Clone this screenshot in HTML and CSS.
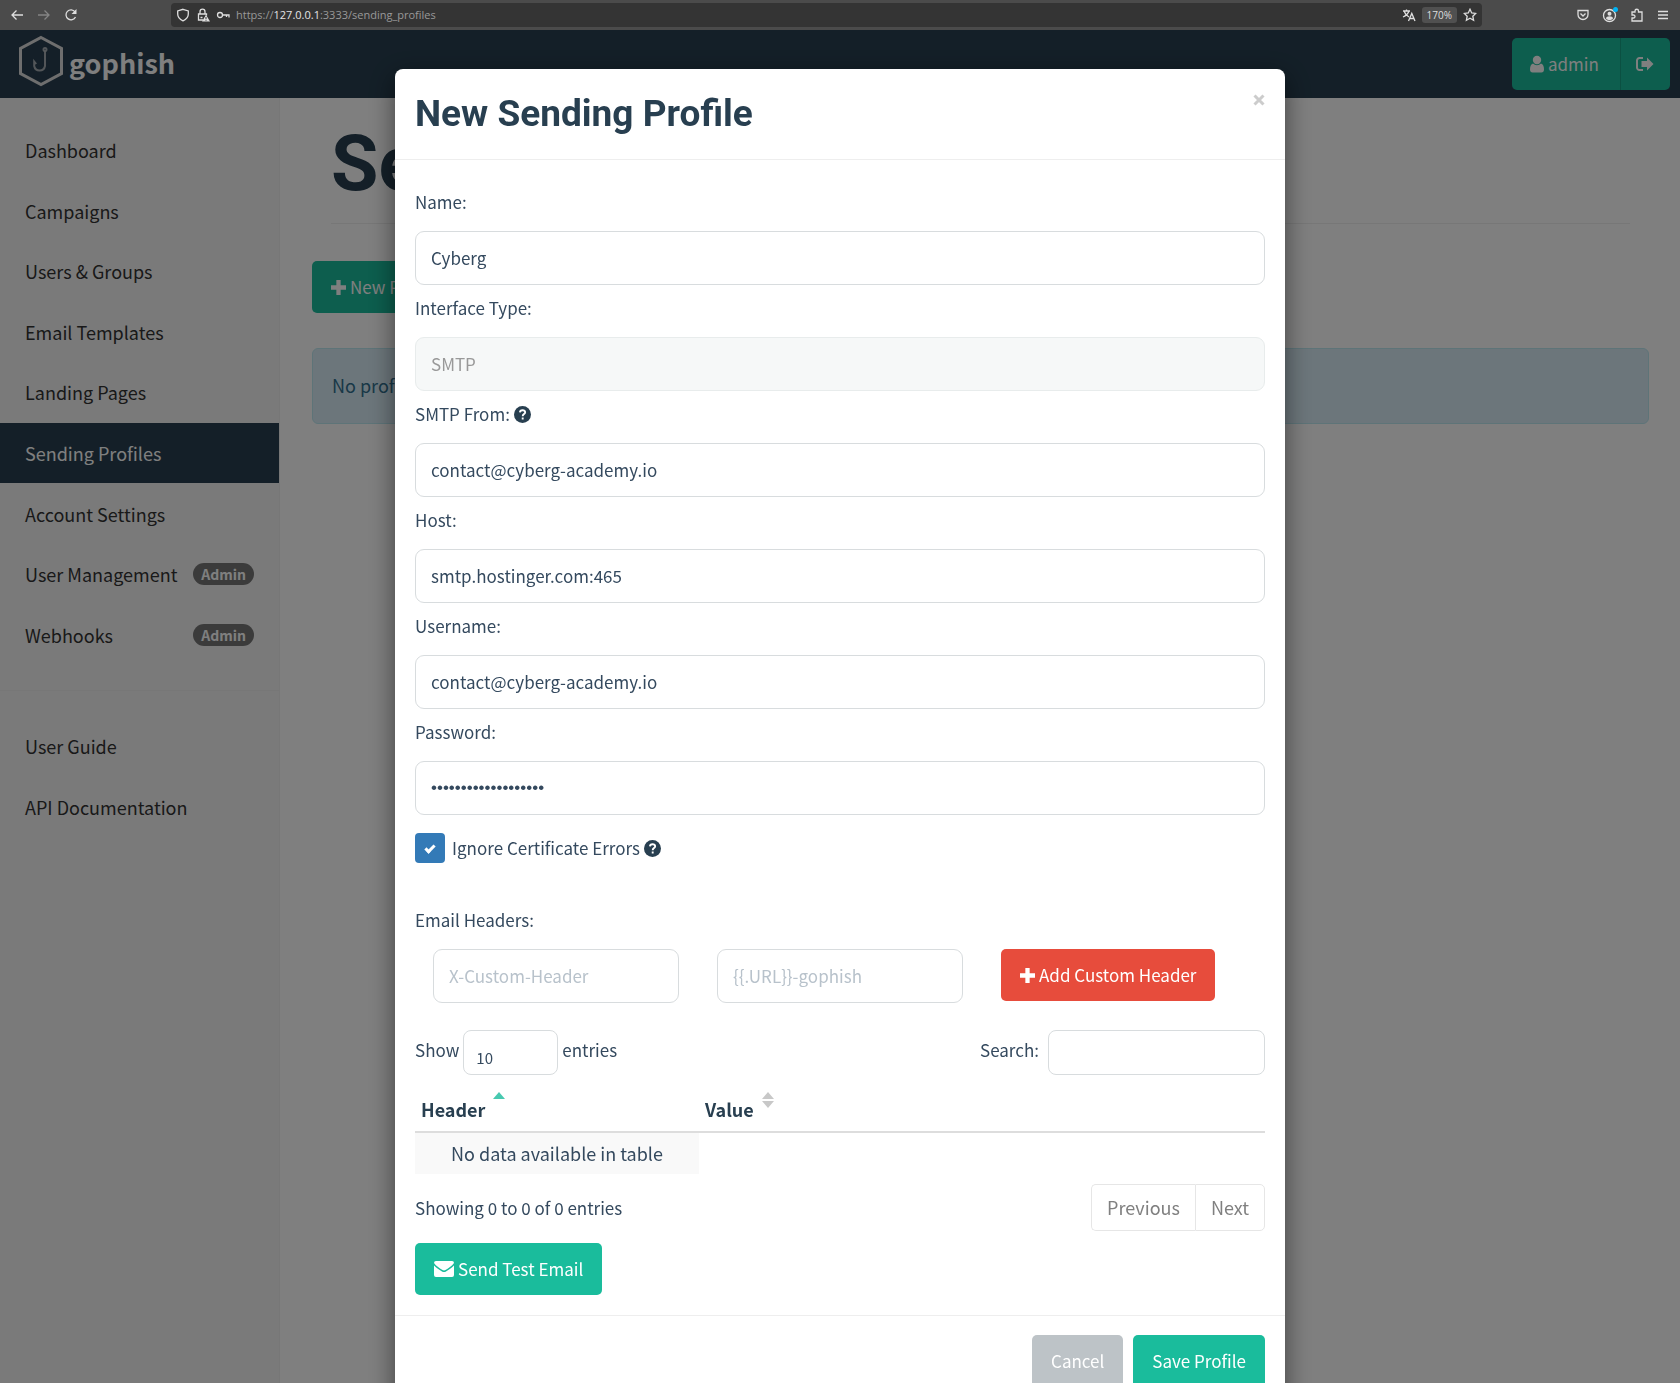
FILE: index.html
```html
<!DOCTYPE html>
<html lang="en">
<head>
<meta charset="utf-8">
<title>Sending Profiles - Gophish</title>
<link rel="stylesheet" href="styles.css">
</head>
<body>
<div class="browser">
  <div class="browser-nav">
    <button type="button" aria-label="Back"><svg width="14" height="14" viewBox="0 0 14 14"><path d="M13 7H2M6.500 2.500L2 7l4.500 4.500"/></svg></button>
    <button type="button" class="dim" aria-label="Forward"><svg width="14" height="14" viewBox="0 0 14 14"><path d="M1 7h11M7.500 2.500L12 7l-4.500 4.500"/></svg></button>
    <button type="button" aria-label="Reload"><svg width="14" height="14" viewBox="0 0 14 14"><path d="M11.500 9A5 5 0 1 1 11 3.800"/><path class="solid" d="M12.500 1v5h-5z"/></svg></button>
  </div>
  <div class="address">
    <svg width="14" height="14" viewBox="0 0 14 14"><path d="M7 1.300L12.300 3v3c0 3.500-2.300 5.500-5.300 6.800C4 11.500 1.700 9.500 1.700 6V3z"/></svg>
    <svg width="14" height="14" viewBox="0 0 14 14"><path d="M7 12H2.500V6h8v1.500M4 6V3.700a2.500 2.500 0 0 1 5 0V6M4.500 9.500h2"/><path class="solid" d="M10 6.800l4 6.700H6z"/><path class="cut" d="M10 9v2M10 11.700v1"/></svg>
    <svg width="14" height="14" viewBox="0 0 14 14"><circle cx="4" cy="7" r="2.500"/><path d="M6.500 7H13v2.500M10.500 7v2"/></svg>
    <span class="url">https://<b>127.0.0.1</b>:3333/sending_profiles</span>
    <svg width="14" height="14" viewBox="0 0 14 14"><path d="M1 3h7M4.500 1.500V3M2 3c1 3 3 5 5 6M7 3C6 6 3.500 8 1 9M6.500 13L9.800 5.500 13 13M8 10.500h4"/></svg>
    <button type="button" class="zoom-level">170%</button>
    <svg width="14" height="14" viewBox="0 0 14 14"><path d="M7 1.200l1.700 3.700 4 .5-2.900 2.800.8 4.100L7 10.300l-3.600 2 .8-4.100L1.300 5.400l4-.5z"/></svg>
  </div>
  <div class="browser-tools">
    <svg width="14" height="14" viewBox="0 0 14 14"><path d="M2 2.500h10v4a5 5 0 0 1-10 0zM4.500 5.500L7 8l2.500-2.500"/></svg>
    <svg width="16" height="16" viewBox="0 0 16 16"><circle cx="7.500" cy="8.500" r="6"/><circle class="solid" cx="7.500" cy="6.700" r="2"/><path class="solid" d="M4 11.500c0-3 7-3 7 0-2 2-5 2-7 0z"/><circle class="alert-dot" cx="13.500" cy="2.500" r="2.500"/></svg>
    <svg width="14" height="14" viewBox="0 0 14 14"><path d="M2 4h3V3a1.700 1.700 0 0 1 3.500 0v1H12v9H2v-3h1.500a1.400 1.400 0 0 0 0-3H2z"/></svg>
    <svg width="14" height="14" viewBox="0 0 14 14"><path d="M2 3.500h10M2 7h10M2 10.500h10"/></svg>
  </div>
</div>

<div class="app">
  <header class="topbar">
    <a class="brand" href="#">
      <svg width="46" height="52" viewBox="0 0 46 52"><path class="hex" d="M23 2.500L43.500 13.500v25L23 49.500 2.500 38.500v-25z"/><path class="hook" d="M27 16.500V31a5.500 5.500 0 0 1-10.800 0v-4.500l2 2.500"/><circle class="hook" cx="27" cy="14.500" r="1.500"/></svg>
      <span>gophish</span>
    </a>
    <div class="user-menu">
      <button type="button" class="btn btn-user"><svg width="14" height="18" viewBox="0 0 14 18"><circle cx="7" cy="5" r="4.200"/><path d="M3 8.500C1 9 0 11.500 0 14.500 0 16.500 1 17.500 2.500 17.500h9c1.500 0 2.500-1 2.500-3C14 11.500 13 9 11 8.500a5.500 5.500 0 0 1-8 0z"/></svg>admin</button>
      <button type="button" class="btn btn-logout" aria-label="Log out"><svg width="18" height="16" viewBox="0 0 18 16"><path class="line" d="M7 2H3.500A2.500 2.500 0 0 0 1 4.500v7A2.500 2.500 0 0 0 3.500 14H7"/><path d="M11 1.500L17.500 8 11 14.500V11H5.500V5H11z"/></svg></button>
    </div>
  </header>
  <div class="columns">
    <nav class="sidebar">
      <ul class="menu menu-main">
        <li><a href="#">Dashboard</a></li>
        <li><a href="#">Campaigns</a></li>
        <li><a href="#">Users &amp; Groups</a></li>
        <li><a href="#">Email Templates</a></li>
        <li><a href="#">Landing Pages</a></li>
        <li><a href="#" class="active">Sending Profiles</a></li>
        <li><a href="#">Account Settings</a></li>
        <li><a href="#">User Management <span class="badge">Admin</span></a></li>
        <li><a href="#">Webhooks <span class="badge">Admin</span></a></li>
      </ul>
      <ul class="menu menu-help">
        <li><a href="#">User Guide</a></li>
        <li><a href="#">API Documentation</a></li>
      </ul>
    </nav>
    <main class="main">
      <h1>Sending Profiles</h1>
      <button type="button" class="btn btn-primary"><svg width="15" height="15" viewBox="1 1 14 14"><path d="M6 1h4v5h5v4h-5v5H6v-5H1V6h5z"/></svg>New Profile</button>
      <div class="alert">No profiles created yet. Let's create one!</div>
    </main>
  </div>
</div>

<div class="backdrop">
  <form class="modal" role="dialog" aria-labelledby="modal-title">
    <div class="modal-header">
      <h4 id="modal-title">New Sending Profile</h4>
      <button type="button" class="close" aria-label="Close"><svg width="12" height="12" viewBox="0 0 12 12"><path d="M1.500 1.500l9 9M10.500 1.500l-9 9"/></svg></button>
    </div>
    <div class="modal-body">
      <label for="name">Name:</label>
      <input class="control" type="text" id="name" value="Cyberg">
      <label for="interface">Interface Type:</label>
      <input class="control" type="text" id="interface" value="SMTP" disabled>
      <label for="from">SMTP From: <svg class="help" width="17" height="17" viewBox="0 0 18 18"><circle cx="9" cy="9" r="9"/><path d="M6.300 6.800C6.500 3.500 12 3.800 11.800 6.900 11.700 8.600 9.200 8.600 9.200 10.800M9.200 12.200v2.200"/></svg></label>
      <input class="control" type="text" id="from" value="contact@cyberg-academy.io">
      <label for="host">Host:</label>
      <input class="control" type="text" id="host" value="smtp.hostinger.com:465">
      <label for="username">Username:</label>
      <input class="control" type="text" id="username" value="contact@cyberg-academy.io">
      <label for="password">Password:</label>
      <input class="control" type="password" id="password" value="0123456789012345678">
      <div class="check">
        <input type="checkbox" id="ignore" checked>
        <label for="ignore">Ignore Certificate Errors <svg class="help" width="17" height="17" viewBox="0 0 18 18"><circle cx="9" cy="9" r="9"/><path d="M6.300 6.800C6.500 3.500 12 3.800 11.800 6.900 11.700 8.600 9.200 8.600 9.200 10.800M9.200 12.200v2.200"/></svg></label>
      </div>
      <label for="header-key" class="headers-label">Email Headers:</label>
      <div class="header-form">
        <input class="control" type="text" id="header-key" placeholder="X-Custom-Header">
        <input class="control" type="text" aria-label="Header value" placeholder="{{.URL}}-gophish">
        <button type="button" class="btn btn-danger"><svg width="15" height="15" viewBox="1 1 14 14"><path d="M6 1h4v5h5v4h-5v5H6v-5H1V6h5z"/></svg>Add Custom Header</button>
      </div>
      <div class="table-tools">
        <div class="tool"><label for="length">Show</label><select id="length"><option>10</option><option>25</option><option>50</option></select><span>entries</span></div>
        <div class="tool tool-search"><label for="search">Search:</label><input type="search" id="search"></div>
      </div>
      <table>
        <thead>
          <tr>
            <th>Header<svg class="sort" width="12" height="18" viewBox="0 0 12 18"><path class="on" d="M0 8l6-7 6 7z"/></svg></th>
            <th>Value<svg class="sort" width="12" height="18" viewBox="0 0 12 18"><path d="M0 8l6-7 6 7zM0 10h12l-6 7z"/></svg></th>
          </tr>
        </thead>
        <tbody><tr><td>No data available in table</td></tr></tbody>
      </table>
      <div class="table-foot">
        <span>Showing 0 to 0 of 0 entries</span>
        <div class="pager"><button type="button">Previous</button><button type="button">Next</button></div>
      </div>
      <button type="button" class="btn btn-primary"><svg width="20" height="16" viewBox="0 0 20 16"><path d="M0 2a2 2 0 0 1 2-2h16a2 2 0 0 1 2 2c-2 3-6 5.500-8.500 7-1 .6-2 .6-3 0C6 7.500 2 5 0 2zM0 4.500c3 3 5.500 4.500 8 6 1.300.8 2.700.8 4 0 2.500-1.500 5-3 8-6V14a2 2 0 0 1-2 2H2a2 2 0 0 1-2-2z"/></svg>Send Test Email</button>
    </div>
    <div class="modal-footer">
      <button type="button" class="btn btn-default">Cancel</button>
      <button type="button" class="btn btn-primary">Save Profile</button>
    </div>
  </form>
</div>
</body>
</html>
```
FILE: styles.css
```css
* { box-sizing: border-box; }

body {
  margin: 0;
  min-height: 100vh;
  display: flex;
  flex-direction: column;
  background: #fff;
  color: #34495e;
  font: 17px/26px "Noto Sans CJK SC", "Open Sans", sans-serif;
}

button, input, select { font: inherit; }
button { cursor: pointer; }
ul { list-style: none; margin: 0; padding: 0; }
a { color: inherit; text-decoration: none; }

/* Browser toolbar */
.browser {
  display: flex;
  align-items: center;
  height: 30px;
  padding: 0 10px;
  background: #4b4b4b;
  color: #dedede;
  font: 11px/16px "Open Sans", "Noto Sans", sans-serif;
}
.browser svg { flex: none; display: block; fill: none; stroke: currentColor; stroke-width: 1.3; }
.browser .solid { fill: currentColor; stroke: none; }
.browser .cut { stroke: #343434; stroke-width: 1; }
.browser .alert-dot { fill: #00b3f4; stroke: none; }
.browser-nav { display: flex; gap: 13px; width: 161px; }
.browser-nav button { padding: 0; border: 0; background: none; color: inherit; }
.browser-nav .dim { color: #858585; }
.address {
  flex: 1;
  display: flex;
  align-items: center;
  gap: 6px;
  height: 24px;
  padding: 0 5px;
  border-radius: 4px;
  background: #343434;
}
.url { flex: 1; color: #999; }
.url b { font-weight: 400; color: #e4e4e4; }
.zoom-level { height: 16px; padding: 0 5px; border: 0; border-radius: 3px; background: #505050; color: #dedede; font-size: 10px; line-height: 16px; }
.browser-tools { display: flex; align-items: center; gap: 12px; margin-left: 94px; }

/* Top bar */
.app { flex: 1; display: flex; flex-direction: column; }
.topbar {
  display: flex;
  justify-content: space-between;
  align-items: center;
  height: 68px;
  padding: 0 10px 0 18px;
  background: #283f50;
}
.brand { display: flex; align-items: center; gap: 5px; color: #fff; font-size: 27px; line-height: 40px; font-weight: 700; }
.brand svg { fill: none; stroke: #ddd; margin-bottom: 6px; }
.brand span { padding-bottom: 3px; }
.hex { stroke-width: 3; }
.hook { stroke-width: 2; opacity: .7; }

.btn {
  display: inline-flex;
  align-items: center;
  gap: 4px;
  height: 52px;
  padding: 0 19px;
  border: 0;
  border-radius: 5px;
  color: #fff;
}
.btn svg { flex: none; fill: currentColor; }
.btn .line { fill: none; stroke: currentColor; stroke-width: 2; }
.btn-primary { background: #1abc9c; }
.btn-danger { background: #e74c3c; }
.btn-default { background: #bdc3c7; }
.user-menu { display: flex; }
.btn-user { background: #1abc9c; border-radius: 5px 0 0 5px; border-right: 1px solid #16a085; width: 109px; padding-left: 18px; }
.btn-logout { background: #1abc9c; border-radius: 0 5px 5px 0; padding: 0 16px 0 15px; }

/* Sidebar */
.columns { flex: 1; display: flex; }
.sidebar { width: 280px; padding-top: 22px; background: #f5f5f5; border-right: 1px solid #eee; color: #333; font-size: 18px; }
.menu { display: grid; grid-auto-rows: 1fr; }
.menu-main { height: 545px; }
.menu-help { height: 147px; margin-top: 25px; padding-top: 25px; border-top: 1px solid #eee; }
.menu a { display: flex; align-items: center; justify-content: space-between; height: 100%; padding: 0 25px; }
.menu .active { background: #283f50; color: #fff; }
.badge { padding: 0 8px; border-radius: 12px; background: #777; color: #fff; font-size: 14px; line-height: 22px; font-weight: 700; }

/* Page */
.main { flex: 1; padding: 20px 31px 0 32px; }
.main h1 {
  margin: 0 19px 37px;
  padding-bottom: 13px;
  border-bottom: 1px solid #eee;
  color: #283f50;
  font: 700 77px/92px Roboto, sans-serif;
}
.alert { margin-top: 35px; padding: 23px 19px 25px; border: 1px solid #bce8f1; border-radius: 6px; background: #d9edf7; color: #31708f; font-size: 18px; }

/* Dialog */
.backdrop { position: fixed; inset: 30px 0 0; overflow: hidden; background: rgba(0, 0, 0, .5); }
.modal {
  max-width: 890px;
  margin: 39px auto;
  border-radius: 8px;
  background: #fff;
  box-shadow: 0 8px 26px rgba(0, 0, 0, .5);
}
.modal-header { display: flex; justify-content: space-between; align-items: flex-start; padding: 20px; border-bottom: 1px solid #eee; }
.modal-header h4 { margin: 0; color: #283f50; font: 700 37px/50px Roboto, sans-serif; }
.close { margin-top: 5px; padding: 0; border: 0; background: none; line-height: 0; }
.close svg { fill: none; stroke: #ccc; stroke-width: 3; }
.modal-body { padding: 19px 20px 20px; }
.modal-body > label { display: block; margin: 10px 0 16px; }
.help { vertical-align: -2px; fill: #283f50; }
.help path { fill: none; stroke: #fff; stroke-width: 2; }

.control {
  display: block;
  width: 100%;
  height: 54px;
  padding: 0 15px 2px;
  border: 1px solid #d8dcde;
  border-radius: 9px;
  background: #fff;
  color: #34495e;
}
.control::placeholder { color: #b8c2cb; }
.control:disabled { background: #f6f8f8; border-color: #e8ecec; color: #999; }
.control[type="password"] { padding-bottom: 0; font-family: "Liberation Sans", sans-serif; }

.check { display: flex; align-items: center; gap: 7px; margin-top: 18px; }
.check input {
  appearance: none;
  width: 30px;
  height: 30px;
  margin: 0;
  border-radius: 4px;
  background: #337ab7;
  display: grid;
  place-items: center;
}
.check input:checked::before { content: ""; width: 7px; height: 3px; border: solid #fff; border-width: 0 0 3px 3px; transform: rotate(-45deg); }
.modal-body > .headers-label { margin-top: 44px; }
.header-form { display: grid; grid-template-columns: 246px 246px auto; justify-content: start; gap: 38px; padding-left: 18px; }
.table-tools { display: flex; justify-content: space-between; margin-top: 27px; }
.tool { display: flex; align-items: center; gap: 4px; height: 45px; }
.tool label, .tool span { padding-bottom: 5px; }
.tool-search { gap: 9px; }
.tool select, .tool input {
  appearance: none;
  height: 45px;
  border: 1px solid #d8dcde;
  border-radius: 8px;
  background: #fff;
  color: #34495e;
}
.tool select { width: 95px; padding: 10px 12px 0; font-size: 15px; }
.tool input { width: 217px; padding: 0 12px; }

table { width: 100%; margin-top: 14px; border-collapse: collapse; table-layout: fixed; font-size: 18px; }
th { padding: 0 6px 9px; height: 43px; border-bottom: 2px solid #ddd; color: #283f50; text-align: left; vertical-align: bottom; }
th:first-child { width: 284px; }
.sort { margin-left: 8px; vertical-align: 8px; fill: #c8c8c8; }
.sort .on { fill: #48c9b0; }
td { height: 42px; padding: 0 0 2px; background: #f9f9f9; text-align: center; }
.table-foot { display: flex; justify-content: space-between; align-items: center; margin: 10px 0 12px; }
.pager { display: flex; }
.pager button { height: 47px; padding: 0 15px 2px; border: 1px solid #e6e6e6; background: #fff; color: #808080; font-size: 18px; }
.pager button:first-child { border-radius: 5px 0 0 5px; border-right: 0; }
.pager button:last-child { border-radius: 0 5px 5px 0; }
.modal-footer { display: flex; justify-content: flex-end; gap: 10px; padding: 19px 20px; border-top: 1px solid #eee; }
```
